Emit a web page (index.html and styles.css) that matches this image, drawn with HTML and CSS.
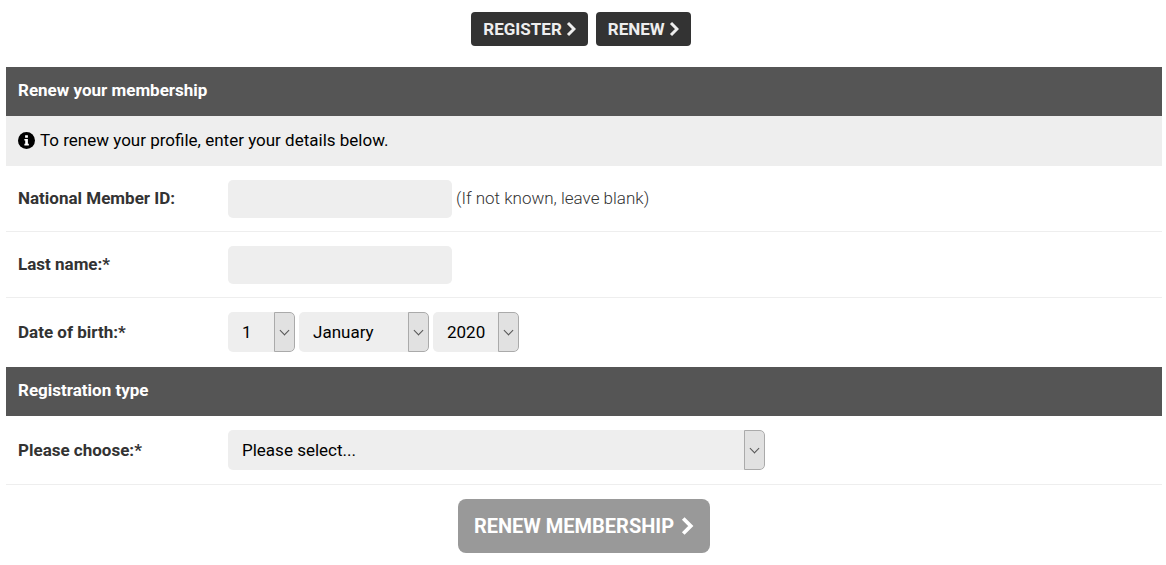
FILE: index.html
```html
<!DOCTYPE html>
<html lang="en">
<head>
  <meta charset="UTF-8">
  <meta name="viewport" content="width=device-width, initial-scale=1.0">
  <title>Renew your membership</title>
  <link rel="stylesheet" href="styles.css">
</head>
<body>
  <div class="top-links">
    <a class="btn" href="#register">REGISTER
      <svg class="chevron" viewBox="0 0 10 16"><path d="M2 2l6 6-6 6"/></svg>
    </a>
    <a class="btn" href="#renew">RENEW
      <svg class="chevron" viewBox="0 0 10 16"><path d="M2 2l6 6-6 6"/></svg>
    </a>
  </div>

  <form class="renew-form">
    <h2 class="section-title">Renew your membership</h2>
    <p class="info">
      <svg class="info-icon" viewBox="0 0 16 16">
        <circle cx="8" cy="8" r="8"/>
        <path fill="#fff" d="M6.7 3h2.6v2.4H6.7zM6 6.6h3.3v4.5h.9v1.5H6v-1.5h.8V8.1H6z"/>
      </svg>
      To renew your profile, enter your details below.
    </p>
    <div class="row">
      <label class="row-label" for="memberId">National Member ID:</label>
      <div class="fields">
        <input class="text-input" type="text" id="memberId" name="memberId">
        <span class="hint">(If not known, leave blank)</span>
      </div>
    </div>
    <div class="row">
      <label class="row-label" for="lastName">Last name:*</label>
      <div class="fields">
        <input class="text-input" type="text" id="lastName" name="lastName">
      </div>
    </div>
    <div class="row select-row last">
      <label class="row-label" for="dobDay">Date of birth:*</label>
      <div class="fields">
        <div class="select day">
          <select id="dobDay" name="dobDay">
            <option>1</option>
          </select>
        </div>
        <div class="select month">
          <select name="dobMonth" aria-label="Month of birth">
            <option>January</option>
          </select>
        </div>
        <div class="select year">
          <select name="dobYear" aria-label="Year of birth">
            <option>2020</option>
          </select>
        </div>
      </div>
    </div>

    <h2 class="section-title">Registration type</h2>
    <div class="row select-row">
      <label class="row-label" for="regType">Please choose:*</label>
      <div class="fields">
        <div class="select type">
          <select id="regType" name="regType">
            <option>Please select...</option>
          </select>
        </div>
      </div>
    </div>

    <div class="actions">
      <button class="btn submit" type="submit">RENEW MEMBERSHIP
        <svg class="chevron" viewBox="0 0 10 16"><path d="M2 2l6 6-6 6"/></svg>
      </button>
    </div>
  </form>
</body>
</html>
```

FILE: styles.css
```css
*, *::before, *::after {
  box-sizing: border-box;
}
body {
  margin: 0;
  padding: 12px 4px 12px 6px;
  font-family: Roboto, Arial, sans-serif;
  font-size: 17px;
  line-height: 20px;
  color: #333;
  background-color: #fff;
}

/* Buttons */
.top-links {
  display: flex;
  justify-content: center;
  gap: 8px;
  margin-bottom: 21px;
  padding-right: 6px;
}
.btn {
  display: flex;
  align-items: center;
  gap: 4px;
  padding: 7px 12px;
  border: 0;
  border-radius: 4px;
  background-color: #333;
  color: #eee;
  font-family: inherit;
  font-size: 17px;
  font-weight: bold;
  line-height: 20px;
  text-decoration: none;
  cursor: pointer;
}
.chevron {
  width: 10px;
  height: 16px;
  fill: none;
  stroke: currentColor;
  stroke-width: 3;
}

/* Sections */
.section-title {
  margin: 0;
  padding: 13px 12px 16px;
  background-color: #555;
  color: #fff;
  font-size: 17px;
  font-weight: bold;
  line-height: 20px;
}
.info {
  display: flex;
  align-items: center;
  gap: 5px;
  margin: 0;
  padding: 14px 12px 16px;
  background-color: #eee;
  color: #000;
}
.info-icon {
  width: 17px;
  height: 17px;
}
.row {
  display: flex;
  align-items: center;
  padding: 14px 12px 13px;
  border-bottom: 1px solid #eee;
}
.select-row {
  padding-bottom: 14px;
}
.row.last {
  border-bottom-color: transparent;
}
.row-label {
  width: 210px;
  padding-bottom: 2px;
  font-weight: bold;
}
.select-row .row-label {
  padding-bottom: 0;
}
.fields {
  display: flex;
  align-items: center;
  gap: 4px;
}
.hint {
  padding-bottom: 2px;
  font-weight: 300;
}

/* Fields */
.text-input {
  width: 224px;
  height: 38px;
  padding: 0 14px;
  border: 0;
  border-radius: 5px;
  background-color: #eee;
  font: inherit;
}
.select {
  position: relative;
  height: 40px;
  border-radius: 5px;
  background-color: #eee;
  overflow: hidden;
}
.select select {
  appearance: none;
  width: 100%;
  height: 100%;
  padding: 0 28px 0 14px;
  border: 0;
  background: transparent;
  color: #000;
  font: inherit;
}
/* arrow box */
.select::before {
  content: "";
  position: absolute;
  top: 0;
  right: 0;
  width: 21px;
  height: 100%;
  border: 1px solid #aaa;
  border-radius: 0 5px 5px 0;
  background-color: #e1e1e1;
  pointer-events: none;
}
.select::after {
  content: "";
  position: absolute;
  top: 15px;
  right: 7px;
  width: 7px;
  height: 7px;
  border: solid #555;
  border-width: 0 1px 1px 0;
  transform: rotate(45deg);
  pointer-events: none;
}
.day {
  width: 67px;
}
.month {
  width: 130px;
}
.year {
  width: 86px;
}
.type {
  width: 537px;
}

.actions {
  display: flex;
  justify-content: center;
  padding-top: 14px;
}
.submit {
  gap: 6px;
  padding: 17px 16px;
  border-radius: 8px;
  background-color: #999;
  color: #fff;
  font-size: 20px;
}
.submit .chevron {
  width: 14px;
  height: 20px;
}
```
